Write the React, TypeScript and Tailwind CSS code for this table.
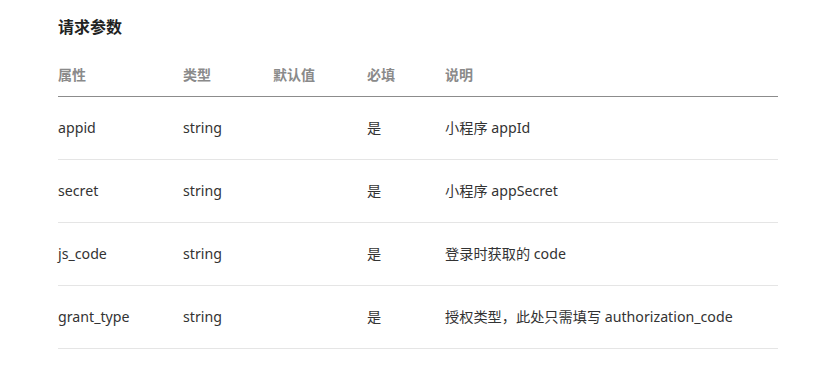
const rows = [
  { name: "appid", type: "string", def: "", req: "是", desc: "小程序 appId" },
  { name: "secret", type: "string", def: "", req: "是", desc: "小程序 appSecret" },
  { name: "js_code", type: "string", def: "", req: "是", desc: "登录时获取的 code" },
  { name: "grant_type", type: "string", def: "", req: "是", desc: "授权类型，此处只需填写 authorization_code" },
];

const cols = "grid grid-cols-[125px_90px_94px_78px_1fr] items-center";

export default function App() {
  return (
    <div
      className="min-h-[372px] bg-white pl-[58px] pt-[15px] text-[#333]"
      style={{ fontFamily: '"Noto Sans", "Noto Sans CJK SC", sans-serif' }}
    >
      <h2 className="text-[16px] font-bold leading-[24px] text-[#222]">请求参数</h2>
      <div className="mt-[15px] w-[720px]">
        <div className={`${cols} h-[43px] border-b border-[#8c8c8c] pb-[2px] text-[14px] font-bold text-[#8a8a8a]`}>
          <div>属性</div>
          <div>类型</div>
          <div>默认值</div>
          <div>必填</div>
          <div>说明</div>
        </div>
        {rows.map((r) => (
          <div key={r.name} className={`${cols} h-[63px] border-b border-[#e5e5e5] pb-[1px] text-[14.2px]`}>
            <div>{r.name}</div>
            <div>{r.type}</div>
            <div>{r.def}</div>
            <div>{r.req}</div>
            <div>{r.desc}</div>
          </div>
        ))}
      </div>
    </div>
  );
}
